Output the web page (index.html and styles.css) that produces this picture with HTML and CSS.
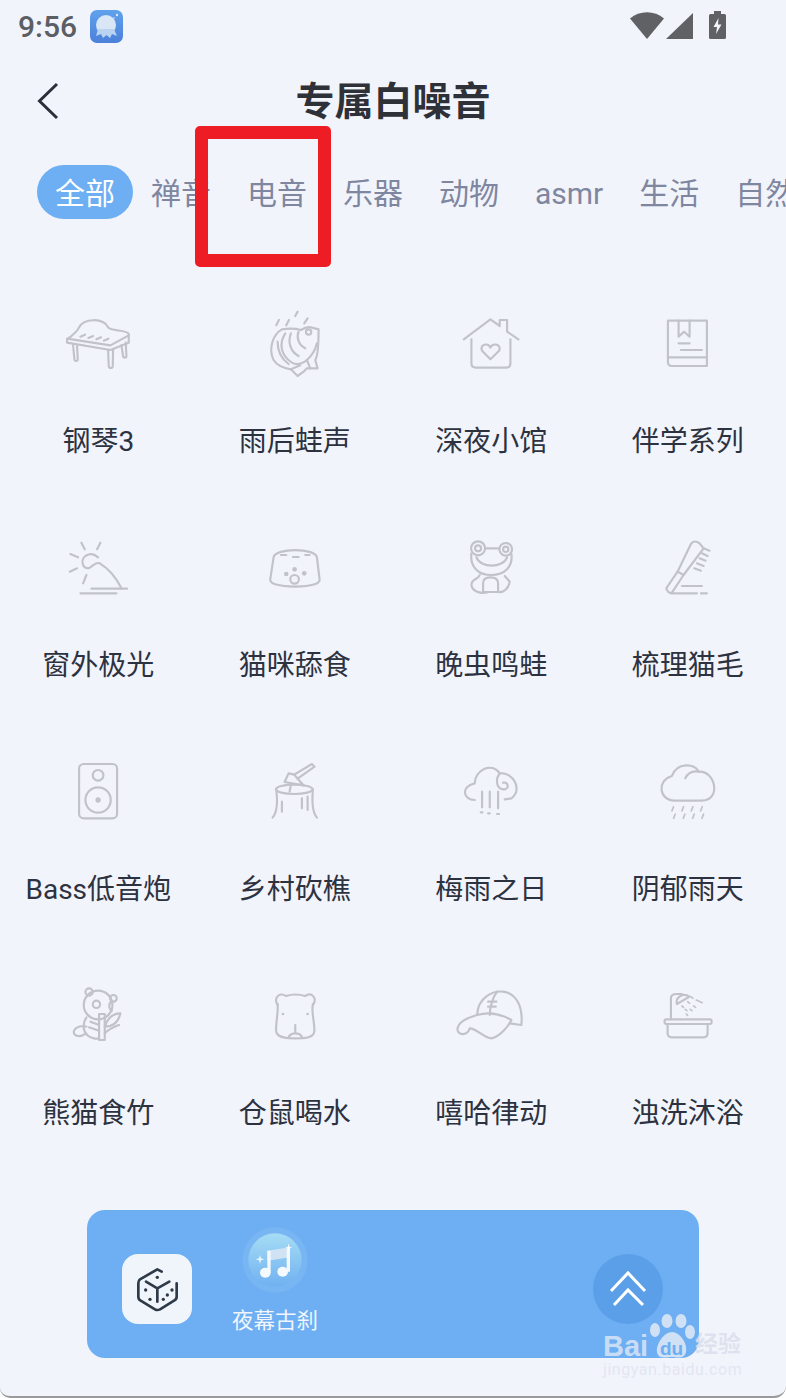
FILE: index.html
```html
<!DOCTYPE html>
<html lang="zh">
<head>
<meta charset="utf-8">
<title>专属白噪音</title>
<link rel="stylesheet" href="styles.css">
</head>
<body>
<div class="screen">
  <div class="status">
    <span class="time">9:56</span>
    <svg class="app-icon" viewBox="0 0 33 33">
      <defs><linearGradient id="ag" x1="0" y1="0" x2="0" y2="1"><stop offset="0" stop-color="#5fa2ec"/><stop offset="1" stop-color="#4c80da"/></linearGradient></defs>
      <rect width="33" height="33" rx="7" fill="url(#ag)"/>
      <circle cx="16" cy="15" r="10" fill="#d8e6f6"/>
      <path d="M8 19L6 26L11 24L13 28L16.500 25L20 28L22 24L27 26L24 19Z" fill="#b9d3f0"/>
      <circle cx="27" cy="5" r="1.200" fill="#dbe9fa"/><circle cx="24" cy="8" r=".8" fill="#dbe9fa"/>
    </svg>
    <div class="status-right">
      <svg class="wifi" viewBox="0 0 34 27"><path d="M0 6.500C9.500 -2 24.500 -2 34 6.500L17 27Z"/></svg>
      <svg class="signal" viewBox="0 0 27 26"><path d="M0 26L27 0V26Z"/></svg>
      <svg class="battery" viewBox="0 0 17 28"><path d="M5 0H12V3H15.500Q17 3 17 4.500V26.500Q17 28 15.500 28H1.500Q0 28 0 26.500V4.500Q0 3 1.500 3H5Z"/><path class="bolt" d="M9.500 7L4.500 16H8L7 23L12.500 13.500H9Z"/></svg>
    </div>
  </div>

  <header class="head">
    <svg class="back" viewBox="0 0 22 38"><path d="M20 2L2.500 19L20 36"/></svg>
    <h1 class="title">专属白噪音</h1>
  </header>

  <nav class="tabs">
    <span class="tab tab-on">全部</span>
    <span class="tab">禅音</span>
    <span class="tab">电音</span>
    <span class="tab">乐器</span>
    <span class="tab">动物</span>
    <span class="tab">asmr</span>
    <span class="tab">生活</span>
    <span class="tab">自然</span>
  </nav>

  <main class="grid">
    <div class="cell">
      <svg class="icon" viewBox="66.750 21 216 216">
        <path d="M82 118C100 105 112 95 118 82C132 55 190 52 205 82C212 95 262 88 267 102V128L212 150L82 128Z"/>
        <path d="M82 116L212 136L267 106"/>
        <path d="M100 135L104 178A5 5 0 0 0 114 178L112 138M205 150L207 198A6 6 0 0 0 219 198L220 148M245 135L250 168A5 5 0 0 0 260 168L258 128"/>
        <path d="M122 110L136 104M146 114L160 108M170 118L184 112M192 122L206 116"/>
      </svg>
      <span class="label">钢琴3</span>
    </div>
    <div class="cell">
      <svg class="icon" viewBox="656.250 21 216 216">
        <path d="M725 88C695 105 685 150 700 180C712 200 735 205 752 208L772 228L790 215L800 205L832 205L825 180C835 165 835 120 835 88L812 82C800 80 790 85 782 90C765 85 745 85 725 88Z"/>
        <path d="M735 100C716 130 720 165 755 188C770 196 785 192 800 180C812 170 825 150 830 130"/>
        <path d="M712 125C712 150 722 175 745 192M752 100C742 125 750 155 775 168M775 95C768 112 775 135 795 145"/>
        <path d="M752 208L780 196M800 180L810 205"/>
        <circle cx="805" cy="96" r="8"/>
        <path d="M772 35L765 48M716 60L708 76M746 60L738 76M802 55L792 70"/>
      </svg>
      <span class="label">雨后蛙声</span>
    </div>
    <div class="cell">
      <svg class="icon" viewBox="105.750 21 216 216">
        <path d="M132 118L212 58L240 78V60H262V95L296 118"/>
        <path d="M155 118V190Q155 203 168 203H260Q272 203 272 190V118"/>
        <path d="M212 178L187 152C178 135 205 125 212 143C220 125 247 135 238 152Z"/>
      </svg>
      <span class="label">深夜小馆</span>
    </div>
    <div class="cell">
      <svg class="icon" viewBox="695.250 21 216 216">
        <path d="M743 62H860V198H755Q743 198 743 185Z"/>
        <path d="M743 172H860M775 62V110L792 95L808 110V62M775 130H808M782 150H845"/>
      </svg>
      <span class="label">伴学系列</span>
    </div>

    <div class="cell">
      <svg class="icon" viewBox="66.750 693 216 216">
        <path d="M125 728L135 748M182 728L172 748M92 762L115 772M90 815L112 805M130 850L140 825"/>
        <path d="M175 772C150 750 120 772 130 795C135 805 142 806 150 803C160 796 170 785 180 790C205 805 228 830 245 865"/>
        <path d="M155 866H262M122 880H230"/>
      </svg>
      <span class="label">窗外极光</span>
    </div>
    <div class="cell">
      <svg class="icon" viewBox="656.250 693 216 216">
        <path d="M700 772C705 743 825 743 830 772L838 838Q840 858 765 860Q688 858 690 838Z"/>
        <path d="M722 765H738M758 771H775M795 765H808"/>
        <circle class="dot" cx="738" cy="822" r="7"/><circle class="dot" cx="763" cy="808" r="7"/><circle class="dot" cx="792" cy="820" r="7"/>
        <circle cx="763" cy="838" r="13"/>
      </svg>
      <span class="label">猫咪舔食</span>
    </div>
    <div class="cell">
      <svg class="icon" viewBox="105.750 693 216 216">
        <circle cx="175" cy="745" r="21"/><circle cx="175" cy="745" r="9"/>
        <circle cx="258" cy="748" r="19"/><circle cx="258" cy="748" r="8"/>
        <path d="M197 745H238M155 760C150 800 175 825 215 825C255 825 280 800 275 762"/>
        <path d="M170 772C182 805 250 805 262 772"/>
        <path d="M180 825C175 840 155 835 155 855C158 878 190 882 205 876H190V850Q190 832 212 832Q235 832 235 850V876H205M235 876C252 880 268 862 270 845L255 828"/>
      </svg>
      <span class="label">晚虫鸣蛙</span>
    </div>
    <div class="cell">
      <svg class="icon" viewBox="695.250 693 216 216">
        <path d="M738 865L772 815L790 825L755 878Q745 882 738 865Z"/>
        <path d="M772 815L812 732Q822 718 838 730L850 745L790 825"/>
        <path d="M850 745L868 752M845 760L862 768M838 775L856 782M830 790L850 798M822 805L842 812"/>
        <path d="M785 858H845M752 880H830M842 880H860"/>
      </svg>
      <span class="label">梳理猫毛</span>
    </div>

    <div class="cell">
      <svg class="icon" viewBox="66.750 15 216 216">
        <rect x="118" y="42" width="114" height="163" rx="14"/>
        <circle cx="175" cy="76" r="16"/><circle cx="175" cy="150" r="38"/>
        <circle class="dot" cx="175" cy="150" r="8"/>
      </svg>
      <span class="label">Bass低音炮</span>
    </div>
    <div class="cell">
      <svg class="icon" viewBox="656.250 15 216 216">
        <ellipse cx="762" cy="118" rx="55" ry="14"/>
        <path d="M708 118C712 150 712 185 697 203M818 118C815 150 815 185 830 203M725 155V185M785 145V175M802 140V180"/>
        <path d="M762 74L815 42L823 50L772 86"/>
        <path d="M745 70L733 96L790 106L772 86L762 74Z"/>
        <path d="M752 104L748 125"/>
      </svg>
      <span class="label">乡村砍樵</span>
    </div>
    <div class="cell">
      <svg class="icon" viewBox="105.750 15 216 216">
        <path d="M165 150C130 150 122 110 165 100C165 60 215 35 240 70C280 65 310 120 275 145L255 148"/>
        <path d="M240 70C225 90 230 120 255 118C270 115 265 95 250 98"/>
        <path d="M187 125V172M210 125V172M235 125V175M183 187H188M205 190H210M232 192H238"/>
      </svg>
      <span class="label">梅雨之日</span>
    </div>
    <div class="cell">
      <svg class="icon" viewBox="695.250 15 216 216">
        <path d="M762 152C715 150 710 90 755 78C770 35 825 40 835 65C885 60 905 150 845 152Z"/>
        <path d="M795 85C805 65 820 62 835 65"/>
        <path class="thin" d="M760 170L755 183M790 170L785 183M818 170L813 183M846 170L841 183M765 192L760 205M794 192L789 205M822 192L817 205M850 192L845 205"/>
      </svg>
      <span class="label">阴郁雨天</span>
    </div>

    <div class="cell">
      <svg class="icon" viewBox="66.750 687 216 216">
        <circle cx="175" cy="765" r="43"/>
        <circle cx="148" cy="726" r="11"/><circle cx="221" cy="745" r="10"/>
        <circle cx="170" cy="763" r="11"/>
        <path d="M213 755C205 765 208 778 216 782"/>
        <path d="M140 802C125 825 128 858 165 866H178M140 830C128 825 105 830 102 845C102 860 125 862 135 852"/>
        <path d="M178 792H195V870H178ZM152 815L178 825M148 832L178 842"/>
        <path d="M195 830C215 830 235 820 242 790C225 790 205 800 195 830ZM195 850C210 835 225 830 238 825"/>
      </svg>
      <span class="label">熊猫食竹</span>
    </div>
    <div class="cell">
      <svg class="icon" viewBox="656.250 687 216 216">
        <path d="M712 765C700 745 715 725 738 738C755 732 775 732 795 738C815 725 832 745 818 765"/>
        <path d="M712 762C715 790 705 820 708 845C712 865 745 865 765 865C790 865 820 865 822 845C825 820 812 790 818 762"/>
        <circle class="dot" cx="728" cy="792" r="4"/><circle class="dot" cx="802" cy="792" r="4"/>
        <path d="M765 825V850M745 862C750 850 765 850 765 850C775 850 785 855 785 862"/>
      </svg>
      <span class="label">仓鼠喝水</span>
    </div>
    <div class="cell">
      <svg class="icon" viewBox="105.750 687 216 216">
        <path d="M172 795C175 740 220 722 250 725C290 730 310 770 305 825L270 820"/>
        <path d="M172 795C140 805 115 815 113 838C115 860 145 855 150 835C170 835 195 865 215 865C240 860 265 830 275 810C240 790 205 785 172 795Z"/>
        <path d="M232 725C220 740 210 770 210 795M205 755H230M205 770H228"/>
      </svg>
      <span class="label">嘻哈律动</span>
    </div>
    <div class="cell">
      <svg class="icon" viewBox="695.250 687 216 216">
        <rect x="733" y="808" width="141" height="14" rx="5"/>
        <path d="M742 822V850Q742 862 755 862H850Q862 862 862 850V822"/>
        <path d="M752 808V745Q752 732 770 732H785"/>
        <path d="M770 762C765 745 785 725 808 740Z"/>
        <path class="thin" d="M812 740L818 745M828 750L846 758M785 768L790 772M802 755L808 760M820 768L826 772M795 778L800 782M810 778L815 782M798 792L802 796"/>
      </svg>
      <span class="label">浊洗沐浴</span>
    </div>
  </main>

  <section class="player">
    <div class="die">
      <svg class="die-icon" viewBox="126 162 210 210">
        <path d="M245 215L232 208L180 238Q175 242 175 250V290Q175 298 182 302L225 328Q232 332 240 328L282 302Q290 298 290 290V250"/>
        <path d="M198 245L232 265L268 245M232 265V305"/>
        <circle cx="232" cy="232" r="5"/><circle cx="197" cy="270" r="5"/><circle cx="210" cy="298" r="5"/><circle cx="262" cy="285" r="5"/><circle cx="250" cy="298" r="5"/><circle cx="276" cy="270" r="5"/>
      </svg>
    </div>
    <div class="track">
      <svg class="disc" viewBox="484 81 198 198">
        <defs><linearGradient id="dg" x1="0" y1="0" x2="0" y2="1"><stop offset="0" stop-color="#a6dcf5"/><stop offset="1" stop-color="#70b1f0"/></linearGradient></defs>
        <circle cx="583" cy="180" r="98" fill="#78b5f3"/>
        <circle cx="583" cy="180" r="80" fill="url(#dg)"/>
        <path d="M560 152L628 142V172L560 182Z" fill="#cfe3f5"/>
        <path d="M560 152H570V218H560ZM618 143H628V215H618Z" fill="#f2f8fd"/>
        <ellipse cx="554" cy="218" rx="16" ry="15" fill="#f5fafe"/>
        <ellipse cx="606" cy="215" rx="16" ry="15" fill="#f5fafe"/>
        <path d="M538 165L541 175L551 178L541 181L538 191L535 181L525 178L535 175Z" fill="#e8f4fc"/>
        <path d="M624 130L626 140L635 142L626 144L624 154L622 144L613 142L622 140Z" fill="#fff"/>
      </svg>
      <span class="track-name">夜幕古刹</span>
    </div>
    <button class="up">
      <svg class="up-icon" viewBox="0 0 70 70"><path d="M18 37L35 19L52 37M21 51L35 36L50 51"/></svg>
    </button>
  </section>

  <div class="mark">
    <span class="mark-bai">Bai</span>
    <svg class="paw" viewBox="0 0 46 46">
      <ellipse cx="5" cy="16" rx="5" ry="7"/><ellipse cx="17" cy="7" rx="5.500" ry="7"/><ellipse cx="31" cy="7" rx="5.500" ry="7"/><ellipse cx="40" cy="18" rx="5" ry="7"/>
      <path d="M22 18C30 18 38 30 36 38C34 46 26 43 22 43C18 43 8 46 7 38C6 30 14 18 22 18Z"/>
    </svg>
    <span class="mark-du">du</span>
    <span class="mark-cn">经验</span>
    <span class="mark-url">jingyan.baidu.com</span>
  </div>

  <div class="redbox"></div>
</div>
</body>
</html>
```

FILE: styles.css
```css
* { box-sizing: border-box; }
html, body { margin: 0; padding: 0; background: #fff; }
body { font-family: Roboto, "Noto Sans CJK SC", sans-serif; }

.screen {
  position: relative;
  width: 786px;
  height: 1398px;
  overflow: hidden;
  background: #f2f4fc;
  border-bottom: 2px solid #9a9a9a;
  border-bottom-left-radius: 10px;
  border-bottom-right-radius: 12px;
  display: flex;
  flex-direction: column;
}

.status { height: 54px; flex: none; display: flex; align-items: flex-start; padding: 10px 60px 0 18px; }
.time { font-size: 30px; line-height: 33px; font-weight: 500; color: #5b5e64; width: 72px; }
.app-icon { width: 33px; height: 33px; }
.status-right { margin-left: auto; display: flex; align-items: flex-start; padding-top: 1px; }
.wifi { width: 34px; height: 27px; margin-top: 1px; fill: #5f6165; }
.signal { width: 27px; height: 26px; margin: 2px 0 0 2px; fill: #5f6165; }
.battery { width: 17px; height: 28px; margin-left: 16px; fill: #5f6165; }
.bolt { fill: #f2f4fc; }

.head { height: 96px; flex: none; display: flex; align-items: center; justify-content: center; position: relative; }
.back { position: absolute; left: 37px; top: 28px; width: 22px; height: 38px; fill: none; stroke: #2b2f3a; stroke-width: 3; }
.title { margin: 0; font-size: 39px; line-height: 48px; font-weight: 700; color: #2e3138; }

.tabs { flex: none; display: flex; margin-top: 15px; padding-left: 37px; white-space: nowrap; }
.tab { flex: none; height: 54px; padding: 2px 18px 0; font-size: 30px; line-height: 54px; color: #7f86a0; }
.tab-on { background: #6eaef2; color: #fff; border-radius: 27px; }

.grid { flex: none; display: grid; grid-template-columns: repeat(4, 1fr); row-gap: 69px; padding-top: 88px; }
.cell { display: flex; flex-direction: column; align-items: center; }
.icon { width: 72px; height: 72px; fill: none; stroke: #c1c3c9; stroke-width: 6.500; stroke-linecap: round; stroke-linejoin: round; }
.icon .dot { fill: #c1c3c9; stroke: none; }
.icon .thin { stroke-width: 5; }
.label { margin-top: 43px; font-size: 28px; line-height: 40px; color: #2d3240; white-space: nowrap; }

.player { flex: none; width: 612px; height: 148px; margin: 76px 0 0 87px; background: #6eaef2; border-radius: 18px; display: flex; align-items: flex-start; }
.die { width: 70px; height: 70px; margin: 44px 0 0 35px; background: #f0f4fb; border-radius: 16px; }
.die-icon { display: block; width: 70px; height: 70px; fill: none; stroke: #2f3a48; stroke-width: 8; stroke-linecap: round; stroke-linejoin: round; }
.die-icon circle { fill: #2f3a48; stroke: none; }
.track { width: 86px; margin: 17px 0 0 40px; display: flex; flex-direction: column; align-items: center; }
.disc { width: 66px; height: 66px; }
.track-name { margin-top: 13px; font-size: 21.500px; line-height: 30px; color: #f1f6fd; white-space: nowrap; }
.up { width: 70px; height: 70px; margin: 44px 36px 0 auto; padding: 0; border: 0; border-radius: 50%; background: #5b9fe9; }
.up-icon { display: block; width: 70px; height: 70px; fill: none; stroke: #fff; stroke-width: 3; }

.mark { position: absolute; left: 603px; top: 1312px; width: 150px; height: 70px; color: rgba(226, 233, 246, .8); }
.mark-bai { position: absolute; left: 0; top: 20px; font: 700 29px/28px "Liberation Sans", sans-serif; }
.paw { position: absolute; left: 47px; top: 2px; width: 46px; height: 46px; fill: rgba(226, 233, 246, .85); }
.mark-du { position: absolute; left: 57px; top: 28px; font: 700 19px/18px "Liberation Sans", sans-serif; color: #6eaef2; }
.mark-cn { position: absolute; left: 92px; top: 20px; font-size: 23px; line-height: 26px; font-weight: 700; color: rgba(220, 224, 238, .9); white-space: nowrap; }
.mark-url { position: absolute; left: 0; top: 49px; font-size: 16px; line-height: 18px; letter-spacing: .55px; color: #e3e6f1; white-space: nowrap; }

.redbox { position: absolute; left: 195px; top: 126px; width: 136px; height: 141px; border: 13px solid #ee1c25; border-radius: 5px; }
```
